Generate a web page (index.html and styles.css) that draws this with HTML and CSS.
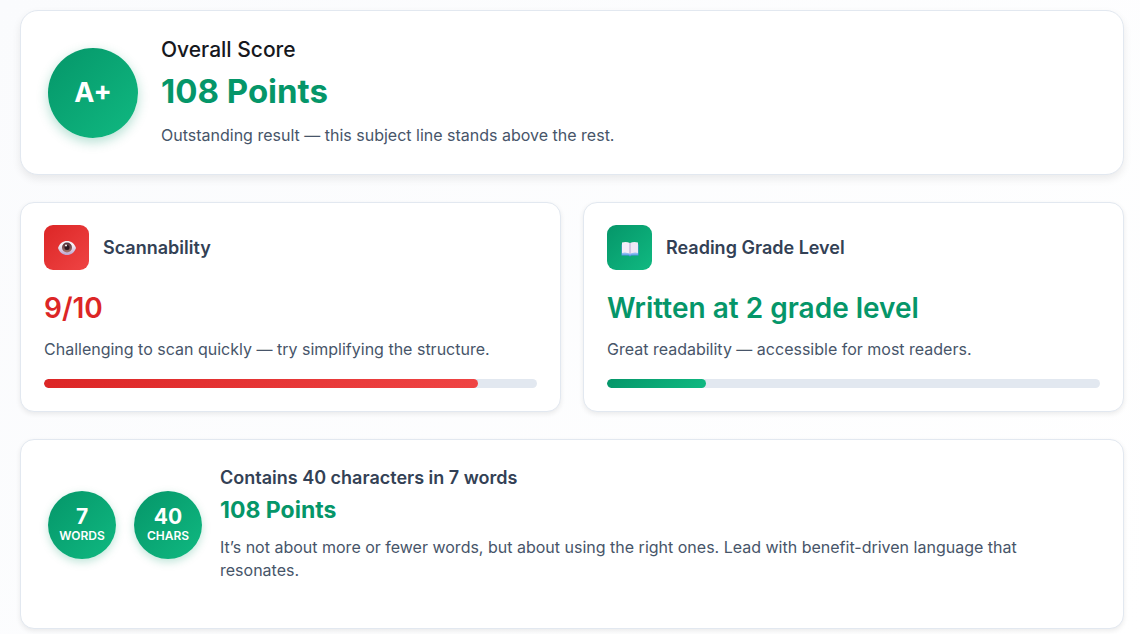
FILE: index.html
```html
<!DOCTYPE html>
<html lang="en">
<head>
    <meta charset="UTF-8">
    <meta name="viewport" content="width=device-width, initial-scale=1.0">
    <title>Subject Line Score</title>
    <link rel="stylesheet" href="styles.css">
</head>
<body>
    <main class="results">
        <section class="card overall">
            <div class="grade">A+</div>
            <div class="details">
                <h1 class="overall-title">Overall Score</h1>
                <div class="overall-points">108 Points</div>
                <p class="text">Outstanding result — this subject line stands above the rest.</p>
            </div>
        </section>

        <div class="metrics">
            <section class="card metric">
                <div class="metric-header">
                    <div class="icon icon-red">
                        <svg width="18" height="18" viewBox="0 0 36 36" aria-hidden="true">
                            <defs>
                                <linearGradient id="eyeWhite" x1="0" y1="0" x2="0" y2="1">
                                    <stop offset="0.3" stop-color="#f5f0f5"/>
                                    <stop offset="1" stop-color="#b9a3cf"/>
                                </linearGradient>
                                <linearGradient id="iris" x1="0" y1="0" x2="0" y2="1">
                                    <stop offset="0" stop-color="#54303a"/>
                                    <stop offset="1" stop-color="#a4766b"/>
                                </linearGradient>
                            </defs>
                            <path d="M0 18C3 9 10 4 18 4s15 5 18 14c-3 9-10 14-18 14S3 27 0 18z" fill="url(#eyeWhite)"/>
                            <circle cx="18" cy="17" r="10" fill="url(#iris)"/>
                            <circle cx="18" cy="17" r="5" fill="#2b151e"/>
                            <circle cx="16" cy="13" r="2" fill="#fff"/>
                        </svg>
                    </div>
                    <h2 class="title">Scannability</h2>
                </div>
                <div class="score red">9/10</div>
                <p class="text">Challenging to scan quickly — try simplifying the structure.</p>
                <div class="bar"><div class="fill fill-red" style="width: 88%"></div></div>
            </section>

            <section class="card metric">
                <div class="metric-header">
                    <div class="icon icon-green">
                        <svg width="18" height="18" viewBox="0 0 36 36" aria-hidden="true">
                            <path d="M1 11h34v22H21l-3 2-3-2H1z" fill="#5595e4"/>
                            <path d="M2 28h32v3H20l-2 1-2-1H2z" fill="#8cbcf2"/>
                            <path d="M2 7q9-2 16 1v21q-7-2-16-1z" fill="#f3eef9"/>
                            <path d="M34 7q-9-2-16 1v21q7-2 16-1z" fill="#eee7f6"/>
                            <path d="M18 8v21" stroke="#b4a3cf" stroke-width="2"/>
                        </svg>
                    </div>
                    <h2 class="title">Reading Grade Level</h2>
                </div>
                <div class="score green">Written at 2 grade level</div>
                <p class="text">Great readability — accessible for most readers.</p>
                <div class="bar"><div class="fill fill-green" style="width: 20%"></div></div>
            </section>
        </div>

        <section class="card counts">
            <div class="badges">
                <div class="badge"><span class="badge-number">7</span><span class="badge-label">WORDS</span></div>
                <div class="badge"><span class="badge-number">40</span><span class="badge-label">CHARS</span></div>
            </div>
            <div class="details">
                <h2 class="title">Contains 40 characters in 7 words</h2>
                <div class="points">108 Points</div>
                <p class="text">It’s not about more or fewer words, but about using the right ones. Lead with benefit-driven language that resonates.</p>
            </div>
        </section>
    </main>
</body>
</html>
```

FILE: styles.css
```css
* {
    box-sizing: border-box;
}
body {
    margin: 0;
    min-height: 100vh;
    font-family: Inter, "Liberation Sans", sans-serif;
    color: #475569;
    background: linear-gradient(135deg, #fafbfd, #fff);
}
h1, h2, p {
    margin: 0;
}
.results {
    display: flex;
    flex-direction: column;
    gap: 27px;
    padding: 10px 16px 5px 20px;
}
.card {
    background: #fff;
    border: 1px solid #e2e8f0;
    border-radius: 14px;
    box-shadow: 0 2px 5px rgba(0, 0, 0, 0.08);
}
.overall {
    display: flex;
    align-items: center;
    gap: 23px;
    padding: 27px;
    border-radius: 18px;
    box-shadow: 0 4px 8px rgba(0, 0, 0, 0.08);
}
.grade {
    display: flex;
    align-items: center;
    justify-content: center;
    flex-shrink: 0;
    width: 90px;
    height: 90px;
    border-radius: 50%;
    background: linear-gradient(135deg, #059669, #10b981);
    box-shadow: 0 4px 12px rgba(5, 150, 105, 0.3);
    color: #fff;
    font-size: 27px;
    font-weight: 700;
}
.details {
    flex: 1;
}
.overall-title {
    font-size: 21px;
    line-height: 24px;
    font-weight: 500;
    color: #16181d;
}
.overall-points {
    margin: 9px 0 13px;
    font-size: 33px;
    line-height: 40px;
    font-weight: 700;
    color: #059669;
}
.text {
    font-size: 16px;
    line-height: 23px;
}
.metrics {
    display: grid;
    grid-template-columns: 1fr 1fr;
    gap: 22px;
}
.metric {
    padding: 22px 23px 23px;
}
.metric-header {
    display: flex;
    align-items: center;
    gap: 14px;
}
.icon {
    display: flex;
    align-items: center;
    justify-content: center;
    width: 45px;
    height: 45px;
    border-radius: 9px;
}
.icon-red, .fill-red {
    background: linear-gradient(135deg, #dc2626, #ef4444);
}
.icon-green, .fill-green {
    background: linear-gradient(135deg, #059669, #10b981);
}
.title {
    font-size: 18px;
    line-height: 22px;
    font-weight: 600;
    color: #334155;
}
.score {
    margin: 20px 0 12px;
    font-size: 28px;
    line-height: 36px;
    font-weight: 600;
}
.red {
    color: #dc2626;
}
.green, .points {
    color: #059669;
}
.bar {
    height: 9px;
    margin-top: 18px;
    border-radius: 5px;
    background: #e2e8f0;
    overflow: hidden;
}
.fill {
    height: 100%;
    border-radius: 5px;
}
.counts {
    display: flex;
    align-items: center;
    gap: 18px;
    padding: 27px 27px 46px;
}
.badges {
    display: flex;
    gap: 18px;
}
.badge {
    display: flex;
    flex-direction: column;
    align-items: center;
    justify-content: center;
    width: 68px;
    height: 68px;
    border-radius: 50%;
    background: linear-gradient(135deg, #059669, #10b981);
    box-shadow: 0 3px 9px rgba(5, 150, 105, 0.25);
    color: #fff;
    font-weight: 700;
}
.badge-number {
    font-size: 21px;
    line-height: 22px;
}
.badge-label {
    font-size: 12px;
    line-height: 16px;
    font-weight: 600;
}
.points {
    margin: 7px 0 12px;
    font-size: 23px;
    line-height: 28px;
    font-weight: 700;
}
```
